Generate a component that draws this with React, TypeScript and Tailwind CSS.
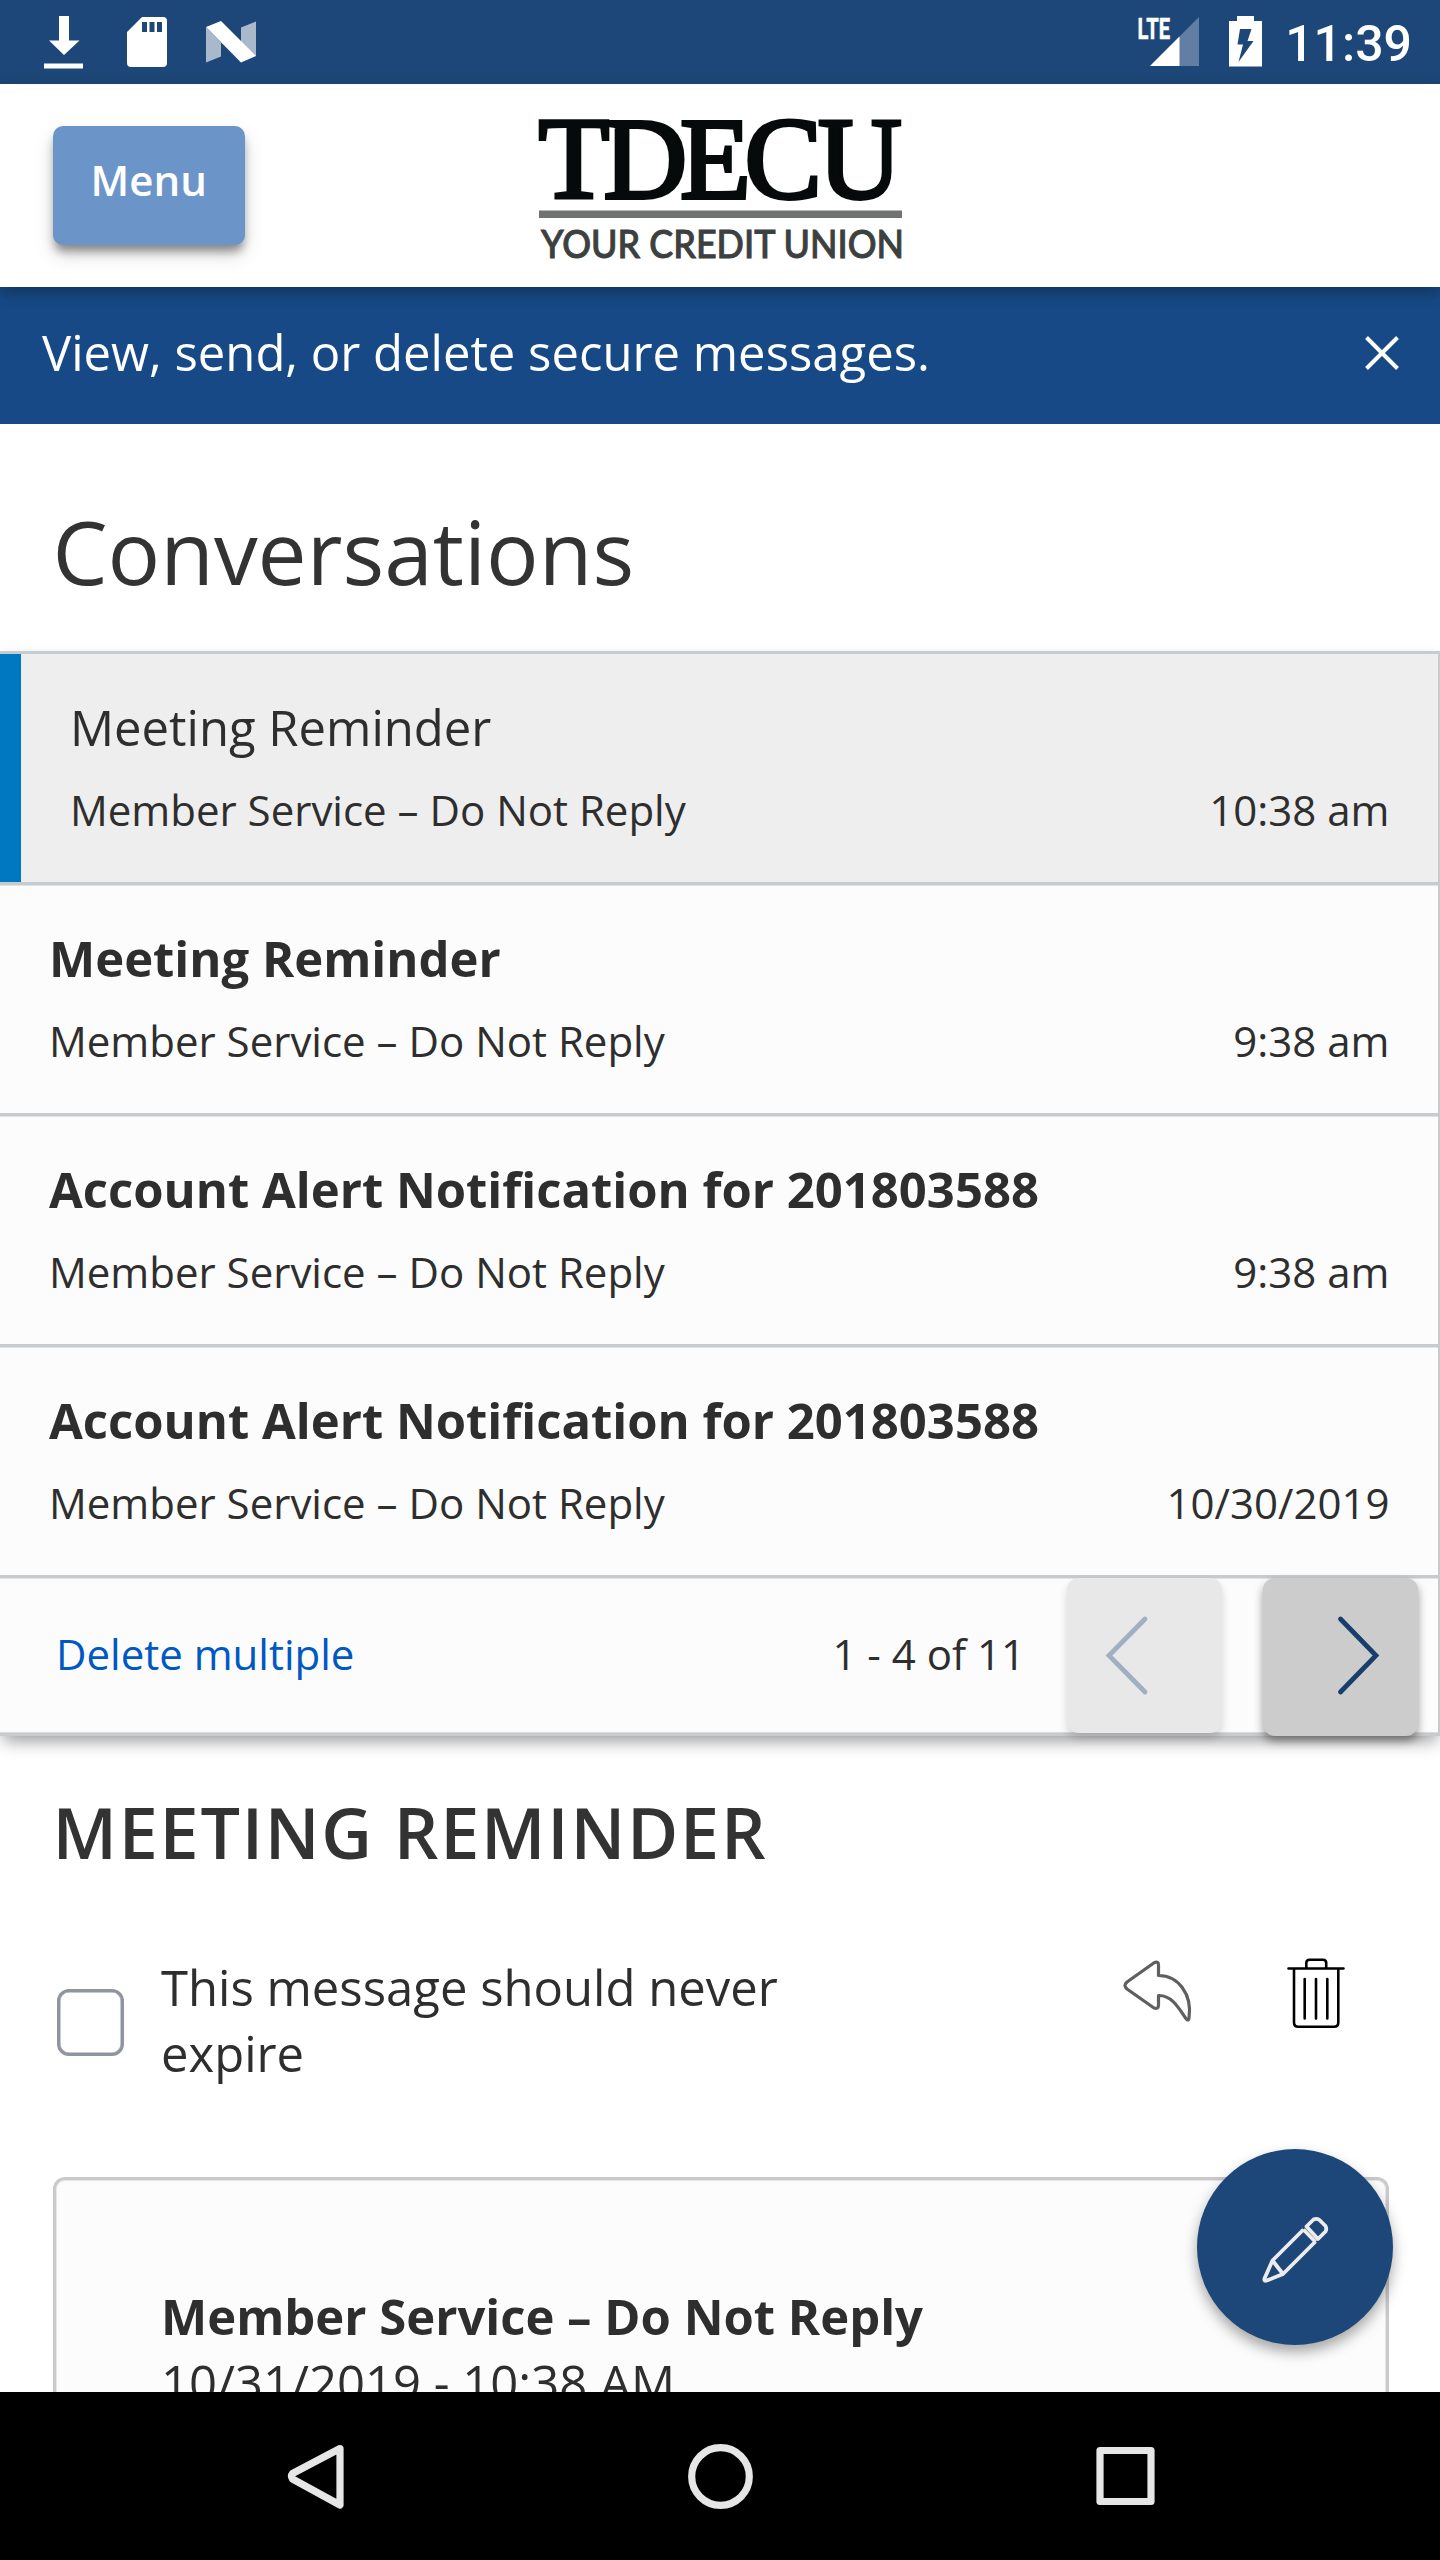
type Message = { subject: string; time: string; selected?: boolean };

const messages: Message[] = [
  { subject: "Meeting Reminder", time: "10:38 am", selected: true },
  { subject: "Meeting Reminder", time: "9:38 am" },
  { subject: "Account Alert Notification for 201803588", time: "9:38 am" },
  { subject: "Account Alert Notification for 201803588", time: "10/30/2019" },
];

function StatusBar() {
  return (
    <div className="flex h-[84px] shrink-0 items-center bg-[#1d4778] pr-[28px] pl-[43px] text-white">
      <svg className="h-[84px] w-[214px]" viewBox="43 0 214 84">
        <path fill="#fff" d="M59 16h10v24.5h10.5L64 55 49 40.500h10zM44 63.500h39v5H44z" />
        <path fill="#fff" fillRule="evenodd" d="M142 17h21q4 0 4 4v42q0 4-4 4h-32q-4 0-4-4V32zM142 22v10h5V22zM149.500 22v10h5V22zM157 22v10h5V22z" />
        <path fill="#aab8cc" d="M206 27l15 15.500v14L206 62.500zM256 21.500v35L241 42V27.500z" />
        <path fill="#fff" d="M206 27l15-6 35 35-15 6.500z" />
      </svg>
      <svg className="ml-auto h-[84px] w-[126px] overflow-visible font-['Roboto']" viewBox="1138 0 126 84">
        <text x="1137.500" y="39" fontSize="29" fontWeight="700" fill="#fff" stroke="#fff" strokeWidth="0.500" textLength="32.500" lengthAdjust="spacingAndGlyphs">LTE</text>
        <path fill="#627ea2" d="M1199 17v49h-49z" />
        <path fill="#fff" d="M1179.500 36.500V66H1150z" />
        <path fill="#fff" fillRule="evenodd" d="M1237.500 16h-0.500v5h-8v45.500h33V21h-8v-5zM1240 29l-2.500 15.500h5.500L1238.500 62l15-21h-6l4-12z" />
      </svg>
      <span className="ml-[21px] pt-[4px] font-['Roboto'] text-[50px] leading-[80px] font-medium">11:39</span>
    </div>
  );
}

function Logo() {
  return (
    <svg className="h-[150px] w-[376px] overflow-visible" viewBox="534 114 376 150">
      <g fontFamily="Liberation Serif" fontSize="116" fill="#060a0a" stroke="#060a0a" strokeWidth="3.800">
        <text x="538.500 603.500 680 744.500 818" y="196.500">TDECU</text>
      </g>
      <rect x="539" y="209.500" width="363" height="7.500" fill="#707372" />
      <text x="541" y="257" fontFamily="Lato" fontSize="39" fontWeight="500" fill="#3c403f" stroke="#3c403f" strokeWidth="1" textLength="363" lengthAdjust="spacingAndGlyphs">
        YOUR CREDIT UNION
      </text>
    </svg>
  );
}

function Header() {
  return (
    <header className="relative z-10 flex h-[203px] shrink-0 items-start bg-white shadow-[0_5px_14px_rgba(0,0,0,0.3)]">
      <button className="mt-[42px] ml-[52.500px] h-[119px] w-[192.500px] rounded-[10px] bg-[#6b95c8] pb-[12px] text-[42px] leading-[57px] font-semibold text-white shadow-[0_10px_20px_rgba(0,0,0,0.15),0_8px_10px_-2px_rgba(0,0,0,0.4)]">
        Menu
      </button>
      <div className="mt-[31px] ml-[289px]">
        <Logo />
      </div>
    </header>
  );
}

function Row({ subject, time, selected }: Message) {
  return (
    <div
      className={
        selected
          ? "h-[231px] border-b-[3px] border-[#c8cbce] bg-[#eeeeee] shadow-[0_1px_0_#e0e2e4]"
          : "h-[231px] border-b-[3px] border-[#c8cbce] bg-[#fcfcfc] shadow-[inset_0_1px_0_#e0e2e4]"
      }
    >
      <div
        className={
          selected
            ? "h-[228px] border-l-[21px] border-[#0078c1] pt-[40px] pr-[48.500px] pl-[49px]"
            : "h-[228px] pt-[40px] pr-[48.500px] pl-[49px]"
        }
      >
        <div className={selected ? "text-[49px] leading-[66px]" : "text-[49px] leading-[66px] font-bold"}>{subject}</div>
        <div className="mt-[21px] flex justify-between text-[42px] leading-[57px]">
          <span>Member Service – Do Not Reply</span>
          <span>{time}</span>
        </div>
      </div>
    </div>
  );
}

function Pager() {
  return (
    <div className="flex h-[158px] items-start border-b-[3px] border-[#c8cbce] bg-[#fcfcfc] pr-[20px] pl-[56px] text-[42px] shadow-[inset_0_1px_0_#e0e2e4,inset_0_-1px_0_#d9dbdd]">
      <a className="mt-[47px] leading-[57px] text-[#0058c4]">Delete multiple</a>
      <span className="mt-[47px] mr-[42px] ml-auto leading-[57px]">1 - 4 of 11</span>
      <button className="h-[155px] w-[155px] rounded-[12px] bg-[#e8e8e8] shadow-[0_5px_9px_rgba(0,0,0,0.16)]">
        <svg className="h-[155px] w-[155px]" viewBox="1067 1578 155 155">
          <path d="M1145 1619l-36 36.500 36 36.500" fill="none" stroke="#a1afc3" strokeWidth="4.800" strokeLinecap="round" />
        </svg>
      </button>
      <button className="ml-[41px] h-[158px] w-[155px] rounded-[12px] bg-[#cccccc] shadow-[0_5px_10px_rgba(0,0,0,0.4)]">
        <svg className="h-[158px] w-[155px]" viewBox="1263 1578 155 158">
          <path d="M1340.500 1619l35.500 36.500-35.500 36.500" fill="none" stroke="#193e6b" strokeWidth="4.800" strokeLinecap="round" />
        </svg>
      </button>
    </div>
  );
}

function MessageActions() {
  return (
    <svg className="h-[80px] w-[240px]" viewBox="1112 1950 240 80" fill="none">
      <path
        d="M1158.500 1975.500V1965q0-4-4-2.500L1127 1982q-4 3.500 0 7l27 19q4.500 1.500 4.500-3v-9.500c13-.5 20 12 27 22.500q2.500 4 3.500 0c3.500-24-11-42.500-30.500-42.500z"
        stroke="#5f5f5f"
        strokeWidth="3.200"
        strokeLinejoin="round"
      />
      <g stroke="#000" strokeWidth="2.600" strokeLinecap="round">
        <path d="M1288.500 1968.500h55M1306.300 1968v-5q0-3.200 3.200-3.200h13.500q3.200 0 3.200 3.200v5M1294 1969v53.500q0 4.300 4.300 4.300h35.700q4.300 0 4.300-4.300V1969M1304.700 1979v39.500M1316 1979v39.500M1327.300 1979v39.500" />
      </g>
    </svg>
  );
}

function ComposeButton() {
  return (
    <button className="absolute top-[2149px] left-[1197px] size-[196px] rounded-full bg-[#1d4778] shadow-[0_7px_14px_rgba(0,0,0,0.35)]">
      <svg className="size-[196px]" viewBox="1197 2149 196 196" fill="none" stroke="#ececec" strokeWidth="3.800" strokeLinejoin="round">
        <path d="M1303.500 2229.500l-31 31-8 18q-.8 3 2.500 2l16-6.500 32.500-32.500M1272.500 2260.500l10.500 13.500M1303.500 2229.500l12 12.500M1306.500 2226.500l7-7q3-1.500 6 .5l6 6q1.500 3 0 5.500l-7.500 7.500z" />
      </svg>
    </button>
  );
}

function NavBar() {
  return (
    <nav className="relative z-10 h-[168px] shrink-0 bg-black">
      <svg className="h-[168px] w-[1440px]" viewBox="0 2392 1440 168" fill="none" stroke="#e6e6e6" strokeWidth="7.200" strokeLinejoin="round">
        <path d="M340 2448.500l-47.500 25q-2 2.500 0 5.500l47.500 26z" />
        <circle cx="720.500" cy="2476.500" r="28.800" />
        <rect x="1100" y="2450.500" width="51" height="51" />
      </svg>
    </nav>
  );
}

export default function App() {
  return (
    <div className="relative flex h-[2560px] w-[1440px] flex-col overflow-hidden bg-white font-['Open_Sans',sans-serif] text-[#2e2e2e]">
      <StatusBar />
      <Header />
      <div className="flex h-[136.500px] shrink-0 items-center justify-between bg-[#164985] pr-[41px] pb-[7px] pl-[42px] text-[49px] leading-[66px] text-white">
        <span>View, send, or delete secure messages.</span>
        <svg className="mt-[2px] size-[34px]" viewBox="0 0 34 34" stroke="#fff" strokeWidth="4">
          <path d="M1.500 1.500l31 31M32.500 1.500l-31 31" />
        </svg>
      </div>
      <main className="h-[1968.500px] shrink-0">
        <h1 className="flex h-[227.500px] items-center pl-[52.500px] text-[87.500px] text-[#333]">
          <span className="mt-[28px]">Conversations</span>
        </h1>
        <section className="border-t-[3px] border-r-[2px] border-[#c8cbce] shadow-[0_8px_16px_-3px_rgba(0,0,0,0.4)]">
          {messages.map((m, i) => (
            <Row key={i} {...m} />
          ))}
          <Pager />
        </section>
        <h2 className="mt-[50px] pl-[52.500px] text-[70px] leading-[92px] font-semibold tracking-[1.750px] text-[#333]">MEETING REMINDER</h2>
        <div className="mt-[76px] flex h-[132px] pr-[88px] pl-[57px]">
          <span className="mt-[35px] size-[67px] rounded-[12px] border-[3px] border-[#8f949d] bg-white shadow-[inset_0_0_0_0.500px_#8f949d]" />
          <p className="ml-[37px] w-[680px] text-[49px] leading-[66px]">
            This message should never
            <br />
            expire
          </p>
          <div className="-mt-[4px] ml-auto">
            <MessageActions />
          </div>
        </div>
        <article className="mt-[91px] mr-[51px] ml-[53px] h-[300px] rounded-[12px] border-[3px] border-[#cacaca] bg-[#fcfcfc] pt-[103px] pl-[105px] text-[49px] leading-[66px] shadow-[inset_0_0_0_1px_#e6e6e6]">
          <div className="font-bold">Member Service – Do Not Reply</div>
          <div>10/31/2019 - 10:38 AM</div>
        </article>
      </main>
      <NavBar />
      <ComposeButton />
    </div>
  );
}
